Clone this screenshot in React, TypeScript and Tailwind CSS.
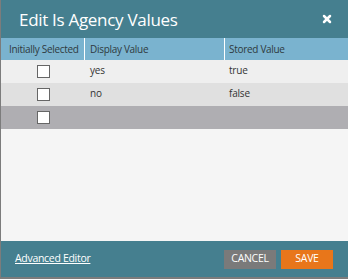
import { X } from "lucide-react";

const rows = [
  { display: "yes", stored: "true", bg: "bg-[#efefef]" },
  { display: "no", stored: "false", bg: "bg-[#e0e0e0]" },
  { display: "", stored: "", bg: "bg-[#afaeb2]" },
];

const Checkbox = () => (
  <div className="w-[13px] h-[13px] bg-white border border-[#666]" />
);

const App = () => {
  return (
    <div
      className="w-[348px] h-[279px] flex flex-col bg-[#f5f5f5] border-l border-b-2 border-[#7c7c7c]"
      style={{ fontFamily: '"Open Sans", "Noto Sans", sans-serif' }}
    >
      <div className="h-[38px] flex items-center justify-between bg-[#457f8f] pl-[18px] pr-[15px]">
        <h1 className="text-white text-[17px] tracking-[-0.3px] leading-none">Edit Is Agency Values</h1>
        <X className="w-[12px] h-[12px] text-white" strokeWidth={5} />
      </div>

      <div className="grid grid-cols-[84px_140px_1fr] h-[22px] bg-[#7ab3cf] text-[10px] tracking-[-0.3px] text-[#2f3a40] whitespace-nowrap">
        <div className="flex items-center pl-[8px] border-r border-white">Initially Selected</div>
        <div className="flex items-center pl-[5px] border-r border-white">Display Value</div>
        <div className="flex items-center pl-[4px]">Stored Value</div>
      </div>

      {rows.map((row, i) => (
        <div
          key={i}
          className={`grid grid-cols-[84px_140px_1fr] h-[23px] text-[10px] tracking-[-0.2px] text-[#333] ${row.bg}`}
        >
          <div className="flex items-center pl-[36px]">
            <Checkbox />
          </div>
          <div className="flex items-center pl-[5px] pb-[2px]">{row.display}</div>
          <div className="flex items-center pl-[4px] pb-[2px]">{row.stored}</div>
        </div>
      ))}

      <div className="flex-1" />

      <div className="h-[36px] flex items-center justify-between bg-[#457f8f] pl-[14px] pr-[15px]">
        <a href="#" className="text-white text-[10.5px] tracking-[-0.3px] underline">
          Advanced Editor
        </a>
        <div className="flex gap-[5px]">
          <button className="w-[52px] h-[19px] bg-[#7a7a7a] text-white text-[10.5px] tracking-[-0.3px]">CANCEL</button>
          <button className="w-[52px] h-[19px] bg-[#e8761a] text-white text-[10.5px] tracking-[-0.3px]">SAVE</button>
        </div>
      </div>
    </div>
  );
};

export default App;
